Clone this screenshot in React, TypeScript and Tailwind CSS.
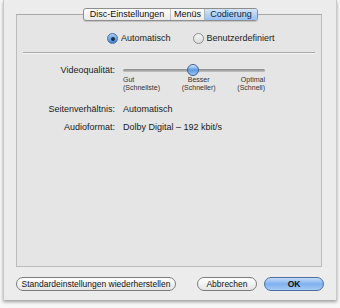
import React from "react";

// Mac OS X-style "Codierung" preferences sheet

const font = { fontFamily: '"Liberation Sans", Arial, sans-serif' };

function Radio({ checked, label }: { checked?: boolean; label: string }) {
  return (
    <div className="flex items-center gap-[3px] h-[11px]">
      <span
        className={
          checked
            ? "w-[11px] h-[11px] rounded-full border border-[#4a6fa5] bg-gradient-to-b from-[#a9cdf5] to-[#3d82d8] flex items-center justify-center"
            : "w-[11px] h-[11px] rounded-full border border-[#8e8e8e] bg-gradient-to-b from-[#f4f4f4] to-[#dcdcdc]"
        }
      >
        {checked && <span className="w-[4px] h-[4px] rounded-full bg-[#1b2d4a]" />}
      </span>
      <span className="text-[9px] leading-none text-[#1a1a1a]">{label}</span>
    </div>
  );
}

function PillButton({ label, primary, className = "" }: { label: string; primary?: boolean; className?: string }) {
  return (
    <div
      className={
        (primary
          ? "border-[#4c6f9f] bg-gradient-to-b from-[#c4dcf8] via-[#7fb0ee] to-[#a6cbf5] font-bold "
          : "border-[#7c7c7c] bg-gradient-to-b from-[#ffffff] via-[#f2f2f2] to-[#e4e4e4] ") +
        "h-[14px] rounded-full border flex items-center justify-center text-[8.5px] leading-none text-[#111] whitespace-nowrap " +
        className
      }
    >
      {label}
    </div>
  );
}

export default function App() {
  return (
    <div className="w-[340px] h-[308px] bg-[#f7f7f7] pl-[3px] overflow-hidden" style={font}>
      <div className="w-[334px] h-[300px] bg-[#ececec] border-x border-[#c9c9c9] shadow-[0_2px_3px_rgba(0,0,0,0.35)] flex flex-col">
        {/* Tabs */}
        <div className="flex pl-[79px] pt-[8px] relative z-10">
          <div className="flex h-[13px] rounded-[3px] border border-[#8d8d8d] bg-gradient-to-b from-[#ffffff] to-[#e9e9e9] text-[9px] leading-none overflow-hidden shadow-[0_1px_1px_rgba(0,0,0,0.15)] whitespace-nowrap">
            <div className="w-[87px] flex items-center justify-center border-r border-[#c2c2c2] text-[#111]">Disc-Einstellungen</div>
            <div className="w-[34px] flex items-center justify-center border-r border-[#b5b5b5] text-[#111]">Menüs</div>
            <div className="w-[52px] flex items-center justify-center bg-gradient-to-b from-[#d3e5f9] to-[#95c0f1] text-[#0b1f3d]">Codierung</div>
          </div>
        </div>

        {/* Panel */}
        <div className="ml-[12px] mt-[-7px] w-[306px] h-[253px] bg-[#e5e5e5] border border-[#bcbcbc] border-t-[#a9a9a9] flex flex-col">
          <div className="flex gap-[22px] pl-[90px] pt-[18px]">
            <Radio checked label="Automatisch" />
            <Radio label="Benutzerdefiniert" />
          </div>
          <div className="mx-[6px] mt-[8px] h-px bg-[#a8a8a8] border-b border-[#f6f6f6] box-content" />

          <div className="grid grid-cols-[98px_1fr] gap-x-[8px] text-[9px] text-[#1a1a1a] mt-[10px]">
            <div className="text-right leading-[12px]">Videoqualität:</div>
            <div className="w-[142px]">
              {/* Slider */}
              <div className="relative h-[12px] flex items-center">
                <div className="w-full h-[3px] rounded-full bg-gradient-to-b from-[#8a8a8a] to-[#c4c4c4]" />
                <div className="absolute left-[64px] top-[0px] w-[12px] h-[12px] rounded-full border border-[#3e5f8f] bg-gradient-to-b from-[#d7e8fb] via-[#5b98e3] to-[#9cc6f4]" />
              </div>
              <div className="flex justify-between text-[7px] leading-[8px] text-[#333]">
                <div>Gut<br />(Schnellste)</div>
                <div className="text-center">Besser<br />(Schneller)</div>
                <div className="text-right">Optimal<br />(Schnell)</div>
              </div>
            </div>

            <div className="text-right mt-[11px] leading-[12px]">Seitenverhältnis:</div>
            <div className="mt-[11px] leading-[12px]">Automatisch</div>

            <div className="text-right mt-[6px] leading-[12px]">Audioformat:</div>
            <div className="mt-[6px] leading-[12px]">Dolby Digital – 192 kbit/s</div>
          </div>
        </div>

        {/* Buttons */}
        <div className="flex items-center pl-[12px] mt-[10px]">
          <PillButton label="Standardeinstellungen wiederherstellen" className="w-[160px]" />
          <PillButton label="Abbrechen" className="w-[60px] ml-[21px]" />
          <PillButton label="OK" primary className="w-[60px] ml-[7px]" />
        </div>
      </div>
    </div>
  );
}
